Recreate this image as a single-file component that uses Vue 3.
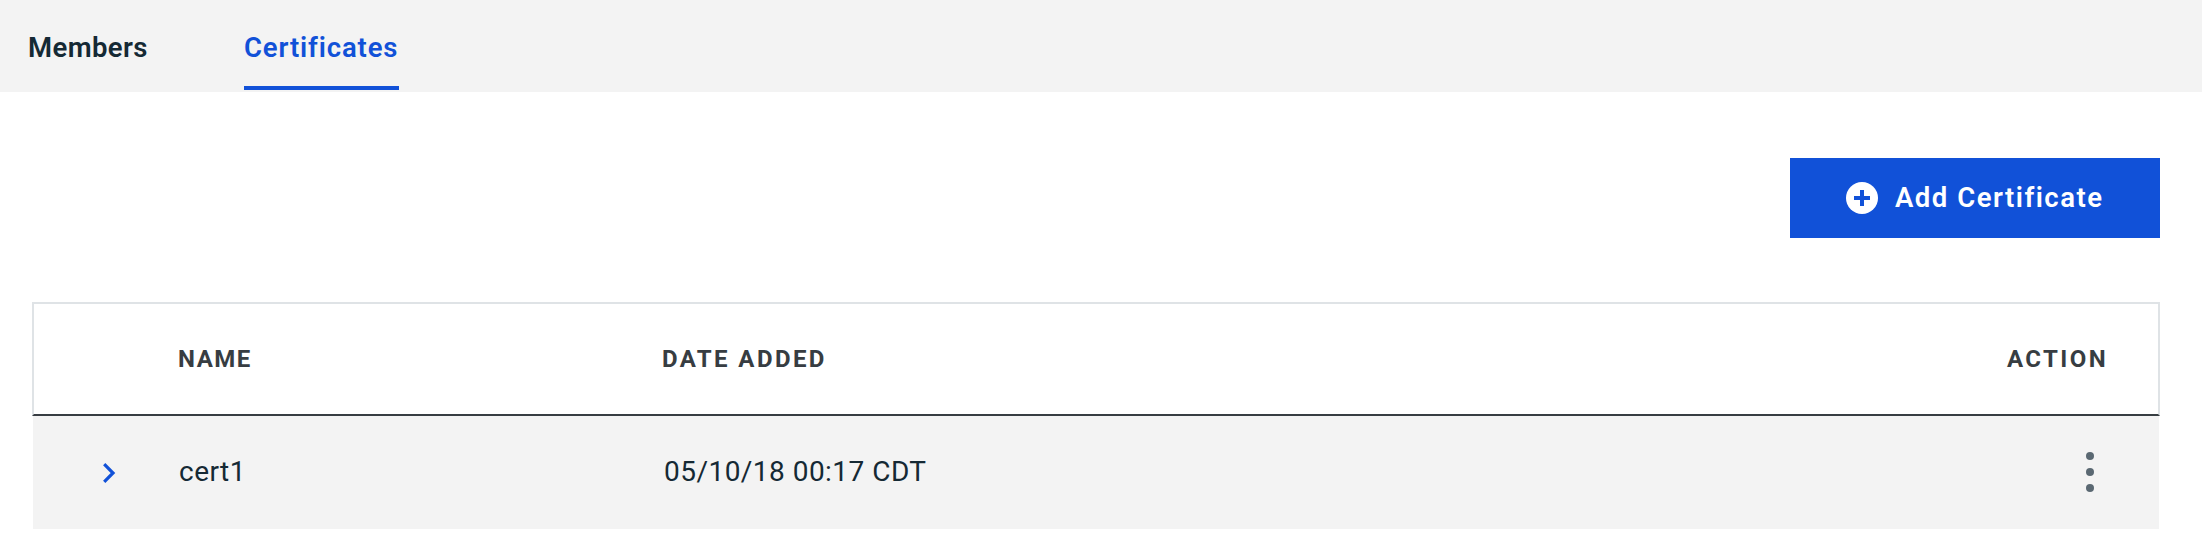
<script setup>
const tabs = [
  { label: 'Members', active: false },
  { label: 'Certificates', active: true },
]
const rows = [{ name: 'cert1', date: '05/10/18 00:17 CDT' }]
</script>

<template>
  <main class="page">
    <nav class="tabs">
      <a v-for="tab in tabs" :key="tab.label" class="tab" :class="{ active: tab.active }">{{ tab.label }}</a>
    </nav>
    <div class="toolbar">
      <button class="add" type="button">
        <svg width="32" height="32" viewBox="0 0 32 32">
          <circle cx="16" cy="16" r="16" fill="#fff" />
          <path d="M16 8v16M8 16h16" stroke="#1151d8" stroke-width="4" />
        </svg>
        <span class="add-label">Add Certificate</span>
      </button>
    </div>
    <section class="table">
      <div class="row head">
        <span></span>
        <span class="h-name">NAME</span>
        <span class="h-date">DATE ADDED</span>
        <span class="h-action">ACTION</span>
      </div>
      <div v-for="row in rows" :key="row.name" class="row body">
        <svg class="chevron" width="16" height="22" viewBox="0 0 16 22">
          <path d="M2.2 2.2L11 11l-8.800 8.800" fill="none" stroke="#1151d8" stroke-width="3.200" />
        </svg>
        <span class="name">{{ row.name }}</span>
        <span class="date">{{ row.date }}</span>
        <svg class="menu" width="8" height="40" viewBox="0 0 8 40">
          <circle cx="4" cy="4" r="4" />
          <circle cx="4" cy="20" r="4" />
          <circle cx="4" cy="36" r="4" />
        </svg>
      </div>
    </section>
  </main>
</template>

<style>
body {
  margin: 0;
  background: #fff;
}
</style>

<style scoped>
.page {
  height: 552px;
  overflow: hidden;
  font-family: Roboto, "Noto Sans", sans-serif;
  color: #152934;
}
.tabs {
  display: flex;
  gap: 95px;
  height: 92px;
  padding-left: 28px;
  background: #f3f3f3;
}
.tab {
  box-sizing: border-box;
  width: 121px;
  height: 90px;
  padding-top: 28px;
  font-size: 27.5px;
  font-weight: 600;
  line-height: 40px;
  letter-spacing: 0.4px;
  white-space: nowrap;
}
.tab.active {
  width: 155px;
  color: #1151d8;
  border-bottom: 4px solid #1151d8;
  letter-spacing: 0.87px;
}
.toolbar {
  display: flex;
  justify-content: flex-end;
  padding: 66px 42px 64px 0;
}
.add {
  display: flex;
  align-items: center;
  gap: 17px;
  width: 370px;
  height: 80px;
  padding: 0 0 0 56px;
  border: 0;
  background: #1151d8;
  color: #fff;
  font: 600 27.5px/40px Roboto, "Noto Sans", sans-serif;
  letter-spacing: 1.5px;
  white-space: nowrap;
}
.table {
  width: 2128px;
  margin-left: 32px;
}
.row {
  display: grid;
  grid-template-columns: 144px 484px 1fr auto;
  align-items: center;
  box-sizing: border-box;
}
.head {
  height: 114px;
  padding-right: 50px;
  border: 2px solid #dfe3e6;
  border-bottom-color: #373d42;
  color: #373d42;
  font-size: 24px;
  font-weight: 700;
  letter-spacing: 2.4px;
}
.h-name {
  letter-spacing: 1.5px;
}
.body {
  height: 113px;
  margin: 0 1px;
  padding: 0 65px 1px 0;
  background: #f3f3f3;
  font-size: 28px;
  letter-spacing: 0.47px;
}
.chevron {
  margin: 2px 0 0 69px;
}
.name {
  padding-left: 2px;
}
.date {
  padding-left: 3px;
}
.name,
.date {
  padding-bottom: 1px;
}
.menu {
  fill: #5a6872;
}
</style>
